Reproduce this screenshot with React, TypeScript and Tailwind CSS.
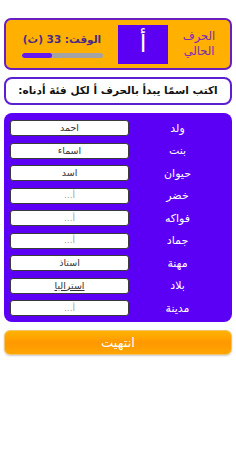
import React from "react";

const rows: { label: string; value: string }[] = [
  { label: "ولد", value: "احمد" },
  { label: "بنت", value: "اسماء" },
  { label: "حيوان", value: "اسد" },
  { label: "خضر", value: "" },
  { label: "فواكه", value: "" },
  { label: "جماد", value: "" },
  { label: "مهنة", value: "استاذ" },
  { label: "بلاد", value: "استراليا" },
  { label: "مدينة", value: "" },
];

export default function App() {
  return (
    <div
      className="w-[236px] h-[472px] bg-white px-[4px] pt-[18px]"
      style={{ fontFamily: '"DejaVu Sans", sans-serif' }}
    >
      {/* Header */}
      <div className="h-[52px] bg-[#ffb000] border-2 border-[#6a1fc0] rounded-[7px] grid grid-cols-[1fr_50px_62px] items-center">
        <div className="flex flex-col items-center pt-[2px]">
          <div dir="rtl" className="text-[10.5px] font-bold text-[#4a2a88] leading-[12px]">
            الوقت: 33 (ث)
          </div>
          <div className="mt-[8px] w-[81px] h-[5px] rounded-full bg-[#a3a3a3] overflow-hidden flex">
            <div className="w-[30px] h-full bg-[#6418f0] rounded-full" />
          </div>
        </div>
        <div className="h-[39px] bg-[#5b00f2] flex items-center justify-center">
          <span className="text-white text-[24px] leading-none">أ</span>
        </div>
        <div dir="rtl" className="text-center text-[11.5px] leading-[15px] text-[#7a2ab8]">
          الحرف
          <br />
          الحالي
        </div>
      </div>

      {/* Instruction */}
      <div className="mt-[7px] h-[28px] border-2 border-[#5a1fd0] rounded-[8px] bg-white flex items-center justify-center">
        <span dir="rtl" className="text-[10.5px] font-bold text-[#111]">
          اكتب اسمًا يبدأ بالحرف أ لكل فئة أدناه:
        </span>
      </div>

      {/* Panel */}
      <div className="mt-[8px] bg-[#5c00f5] rounded-[8px] pt-[7px] pb-[6px] pl-[6px] pr-[6px] flex flex-col gap-[6.5px]">
        {rows.map((r) => (
          <div key={r.label} className="grid grid-cols-[119px_1fr] items-center h-[16px]">
            <div className="h-[16px] bg-white border border-[#3a3a3a] rounded-[3px] flex items-center justify-center">
              {r.value ? (
                <span
                  dir="rtl"
                  className={
                    "text-[9.5px] text-[#333] leading-none" +
                    (r.value === "استراليا" ? " underline" : "")
                  }
                >
                  {r.value}
                </span>
              ) : (
                <span dir="rtl" className="text-[9px] text-[#a0a0a0] leading-none">
                  أ...
                </span>
              )}
            </div>
            <div dir="rtl" className="text-center text-white text-[11px] leading-none">
              {r.label}
            </div>
          </div>
        ))}
      </div>

      {/* Button */}
      <div className="mt-[8px] h-[25px] rounded-[6px] border border-[#f3c36c] bg-gradient-to-b from-[#ffb300] via-[#ff9800] to-[#ffa600] shadow-[0_1px_2px_rgba(0,0,0,0.2)] flex items-center justify-center">
        <span className="text-white text-[13px] leading-none">انتهيت</span>
      </div>
    </div>
  );
}
